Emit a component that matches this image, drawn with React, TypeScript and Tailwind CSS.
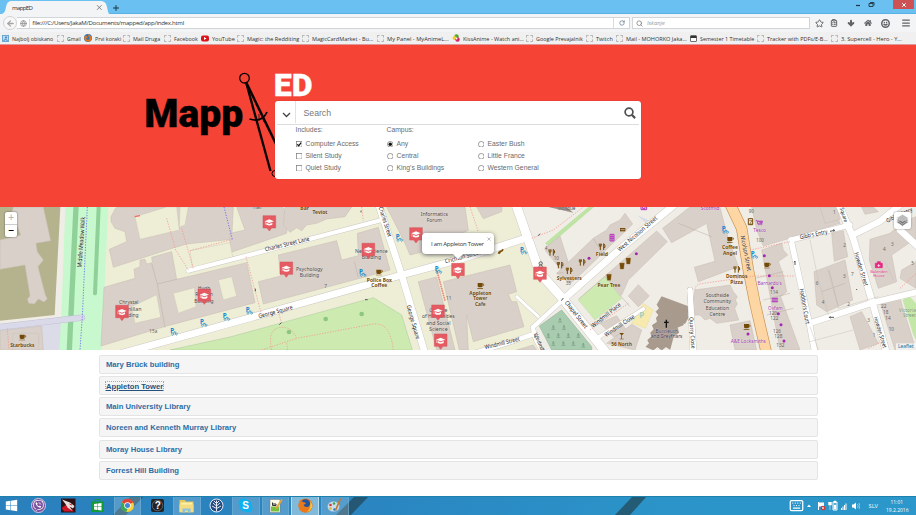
import React from "react";
import { FaViber, FaWindows, FaFirefoxBrowser, FaHome } from "react-icons/fa";
import { ArrowLeft, Globe, RotateCw, Search, Star, ClipboardList, ArrowDown, Smile, Menu, Keyboard, Plus, X } from "lucide-react";

const bookmarks: [string, number, string][] = [
  ["Najbolj obiskano", 54.5, "recent"], ["Gmail", 27, "blank"], ["Prvi koraki", 39.5, "fox"],
  ["Mail Druga", 40.5, "blank"], ["Facebook", 37, "blank"], ["YouTube", 36, "yt"],
  ["Magic: the Redditing", 65.5, "blank"], ["MagicCardMarket - Bu...", 74.5, "blank"],
  ["My Panel - MyAnimeL...", 75, "blank"], ["KissAnime - Watch ani...", 74, "kiss"],
  ["Google Prevajalnik", 60, "blank"], ["Twitch", 30, "blank"], ["Mail - MOHORKO Jaka...", 74, "blank"],
  ["Semester 1 Timetable", 67.5, "cal"], ["Tracker with PDFs/E-B...", 74, "blank"], ["3. Supercell - Hero - Y...", 74, "blank"],
];

function BookmarkIcon({ kind }: { kind: string }) {
  if (kind === "blank") return <span className="h-[7px] w-[7px] shrink-0 rounded-[1px] border border-dashed border-[#b9b9b9]" />;
  if (kind === "fox") return <FaFirefoxBrowser className="h-2 w-2 shrink-0 rounded-full bg-[#2878b8] text-[#e8761c]" />;
  if (kind === "yt")
    return (
      <svg className="h-[7px] w-2 shrink-0" viewBox="0 0 16 14"><rect y="1" width="16" height="12" rx="4" fill="#d9141b" /><path d="M6 4l5 3-5 3z" fill="#fff" /></svg>
    );
  if (kind === "kiss")
    return (
      <svg className="h-2 w-2 shrink-0" viewBox="0 0 16 16"><circle cx="9" cy="5" r="4.5" fill="#54a82a" /><circle cx="5" cy="8" r="4" fill="#f0cf28" /><circle cx="11" cy="11" r="4.5" fill="#d5246d" /><circle cx="9" cy="9" r="2" fill="#fff" /></svg>
    );
  if (kind === "cal")
    return (
      <svg className="h-[7px] w-[7px] shrink-0" viewBox="0 0 14 14"><rect x="1" y="2" width="12" height="11" rx="1" fill="#fff" stroke="#444" strokeWidth="1.500" /><path d="M1 1h12v5H1z" fill="#333" /></svg>
    );
  return (
    <svg className="h-[7px] w-[7px] shrink-0" viewBox="0 0 14 14"><rect x="1" y="1" width="12" height="12" fill="#b9d9ef" stroke="#6ba9d4" strokeWidth="2" /><circle cx="8" cy="5" r="2" fill="#347fb8" /><path d="M3 12l4-4 4 4" stroke="#347fb8" fill="none" strokeWidth="2" /></svg>
  );
}

function Browser() {
  return (
    <div className="font-['Open_Sans','Noto_Sans',sans-serif] text-[#333]">
      <div className="flex h-[14px] items-start justify-between border-b border-[#58b2e6] bg-[#69c0f1]">
        <div className="flex h-[14px]">
          <svg className="h-[14px] w-[110px]" viewBox="0 0 110 14">
            <path d="M0 14C5 14 5 11 6 7Q7 1 11 1H101Q106 1 107 7C108 11 108 14 110 14Z" fill="#f2f4f6" />
            <text x="12" y="9.700" fontSize="6.1" fill="#333" textLength="21">mappED</text>
            <path d="M97 5.2l4.600 4.600M101.600 5.200L97 9.800" stroke="#666" strokeWidth=".8" />
          </svg>
          <Plus className="mt-[4px] ml-[2px] h-[8px] w-[8px] text-[#31566d]" strokeWidth={4} />
        </div>
        <div className="flex items-center">
          <svg className="h-[9px] w-[42px]" viewBox="0 0 42 9"><path d="M5 5.500h4" stroke="#234" strokeWidth="1.200" /><path d="M18 3.500h4v3h-4zM19 2.500h4v3" stroke="#234" fill="none" strokeWidth=".9" /></svg>
          <div className="mr-[2px] flex h-[9px] w-[21px] items-center justify-center bg-[#cc5254]"><X className="h-[6px] w-[6px] text-white" strokeWidth={4} /></div>
        </div>
      </div>
      <div className="flex h-[18px] items-center bg-[#f3f4f5]">
        <div className="ml-[3px] flex h-[14px] w-[14px] shrink-0 items-center justify-center rounded-full border border-[#d2d2d2] bg-[#f8f8f8]"><ArrowLeft className="h-[9px] w-[9px] text-[#a5a5a5]" strokeWidth={3.5} /></div>
        <div className="flex h-[12px] w-[613px] items-center border border-l-0 border-[#d2d5d8] bg-white">
          <Globe className="ml-[3px] h-[7px] w-[7px] text-[#999]" strokeWidth={3} />
          <span className="ml-[2px] h-[9px] border-l border-[#ddd]" />
          <svg className="ml-[2px] h-[10px] w-[155px]" viewBox="0 0 155 10"><text y="7.300" fontSize="6.100" fill="#333" textLength="152">file:///C:/Users/JakaM/Documents/mapped/app/index.html</text></svg>
          <span className="ml-auto flex h-full w-[16px] items-center justify-center border-l border-[#d8dce0]"><RotateCw className="h-[6px] w-[6px] text-[#6c8093]" strokeWidth={3} /></span>
        </div>
        <div className="ml-[2px] flex h-[12px] w-[178px] items-center gap-[4px] border border-[#d2d5d8] bg-white pl-[3px] text-[5.8px] italic text-[#999]"><Search className="h-[7px] w-[7px] text-[#777]" strokeWidth={2.500} /><span>Iskanje</span></div>
        <div className="ml-[5px] flex items-center gap-[9px] text-[#606367]">
          <Star className="h-[9px] w-[9px]" strokeWidth={2.500} />
          <ClipboardList className="-ml-[3px] h-[8px] w-[8px]" strokeWidth={3} />
          <ArrowDown className="h-[8px] w-[8px]" strokeWidth={6} />
          <FaHome className="h-[8px] w-[8px]" />
          <Smile className="h-[9px] w-[9px]" strokeWidth={4} />
          <Menu className="ml-[2px] h-[10px] w-[10px]" strokeWidth={3} />
        </div>
      </div>
      <div className="flex h-[13px] items-center overflow-hidden border-b border-[#d99] bg-[#f0f0f0] pl-[2px]">
        {bookmarks.map(([name, width, kind]) => (
          <div key={name} className="flex shrink-0 items-center gap-[3px]" style={{ width }}>
            <BookmarkIcon kind={kind} />
            <svg className="h-[10px] flex-1 overflow-visible">
              <text y="7.500" fontSize="6" fill="#333" textLength={width - 13.2} lengthAdjust="spacingAndGlyphs">{name}</text>
            </svg>
          </div>
        ))}
      </div>
    </div>
  );
}

function Option({ label, checked = false, round = false }: { label: string; checked?: boolean; round?: boolean }) {
  return (
    <div className="flex h-[12px] items-center gap-[3.5px]">
      <svg className="h-[6.5px] w-[6.5px]" viewBox="0 0 12 12">
        {round ? <circle cx="6" cy="6" r="5.200" fill="#fff" stroke="#777" strokeWidth="1.300" /> : <rect x=".8" y=".8" width="10.400" height="10.400" fill="#fff" stroke="#777" strokeWidth="1.300" />}
        {checked && (round ? <circle cx="6" cy="6" r="3.200" fill="#111" /> : <path d="M2.500 6l2.500 3 4.500-6" fill="none" stroke="#111" strokeWidth="2.200" />)}
      </svg>
      <span>{label}</span>
    </div>
  );
}

function Header() {
  return (
    <header className="relative h-[162px] overflow-hidden bg-[#f54336]">
      <svg className="absolute inset-0 h-[162px] w-[330px] font-['Roboto',sans-serif]" viewBox="0 45 330 162">
        <text x="144.300" y="126.500" fontSize="38" fontWeight="900" textLength="99" lengthAdjust="spacingAndGlyphs" stroke="#000" strokeWidth=".3">Mapp</text>
        <text x="273.700" y="95.500" fontSize="31" fontWeight="900" fill="#fff" textLength="38.800" lengthAdjust="spacingAndGlyphs" stroke="#fff" strokeWidth=".3">ED</text>
        <g fill="none" stroke="#080202">
          <circle cx="244.500" cy="78.200" r="4.800" strokeWidth="1.300" />
          <path d="M246 82L270.500 171" strokeWidth="2.300" />
          <path d="M246 82L277 146" strokeWidth="2.500" />
          <path d="M249.500 119Q262 123 267 112" strokeWidth="1.800" />
          <path d="M259 114v7M262 117l2 5" strokeWidth=".7" />
          <circle cx="275" cy="173.500" r="3" strokeWidth="1" />
        </g>
      </svg>
      <div className="relative mt-[55.5px] ml-[275px] h-[78.5px] w-[366px] rounded-[3px] bg-white font-['Liberation_Sans',Arial,sans-serif] text-[6.8px] text-[#6b6b6b] shadow-[0_0_1px_#a33]">
        <div className="mx-[2px] flex h-[24px] items-center border-b border-[#ddd]">
          <div className="flex h-[22px] w-[19px] items-center justify-center border-r border-[#e2e2e2] pt-[5px]"><svg className="h-[6px] w-[9px]" viewBox="0 0 9 6"><path d="M1 1l3.500 3.500L8 1" fill="none" stroke="#444" strokeWidth="1.300" /></svg></div>
          <span className="ml-[7.5px] pt-[3px] text-[8.7px] text-[#777]">Search</span>
          <svg className="mt-[1px] mr-[3px] ml-auto h-[12px] w-[12px]" viewBox="0 0 12 12" fill="none" stroke="#505050"><circle cx="5" cy="5" r="3.900" strokeWidth="1.700" /><path d="M7.800 7.800l3.300 3.300" strokeWidth="2.200" /></svg>
        </div>
        <div className="grid grid-cols-[91px_91px_1fr] pt-[.5px] pl-[20.500px]">
          <div><div className="mb-[3px] h-[10px] leading-[10px]">Includes:</div><Option label="Computer Access" checked /><Option label="Silent Study" /><Option label="Quiet Study" /></div>
          <div><div className="mb-[3px] h-[10px] leading-[10px]">Campus:</div><Option round label="Any" checked /><Option round label="Central" /><Option round label="King's Buildings" /></div>
          <div className="pt-[13px]"><Option round label="Easter Bush" /><Option round label="Little France" /><Option round label="Western General" /></div>
        </div>
      </div>
    </header>
  );
}

/* Map drawing units: three units per screen pixel. */
const BUILDINGS = [
  "40,21 130,21 152,122 108,130 112,155 130,180 114,200 136,285 142,296 132,306 115,297 103,312 86,310 82,297 90,288 75,195 0,208 0,120 62,105 36,35",
  "0,392 125,378 130,450 0,450",
  "345,28 333,50 333,65 345,85 375,95 380,125 328,148 340,202 500,150 560,132 695,118 700,21 350,21",
  "312,262 405,235 402,208 420,200 420,180 435,178 440,192 457,188 455,172 515,155 530,238 740,188 765,308 500,378 303,438",
  "710,21 848,21 865,50 860,100 690,158 690,100 735,90",
  "855,21 1055,21 1035,50 980,57 950,70 920,75 905,92 890,83 870,97 850,75",
  "775,245 842,228 835,165 1010,122 1025,180 1075,167 1072,100 1135,82 1170,210 1080,235 790,312",
  "1160,21 1395,21 1405,90 1300,148 1230,165 1215,130",
  "1255,245 1310,231 1350,390 1365,450 1310,450",
  "1330,245 1530,195 1550,275 1525,283 1535,305 1550,305 1572,380 1420,425 1400,345 1405,450 1378,450",
  "1430,21 1506,21 1505,35 1450,56", "1550,450 1600,435 1610,450",
  "1640,140 1680,108 1710,203 1690,218 1635,150",
  "1670,220 1780,115 1820,90 1830,75 1860,60 1875,40 1898,72 1730,235 1710,250",
  "1735,298 1970,93 2002,125 1885,240 1865,285 1840,298 1815,230",
  "1885,288 1915,254 1948,288 1915,320", "1800,370 1850,347 1885,400 1840,410",
  "1860,400 1895,373 1925,390 1905,450 1820,430",
  "1988,85 2070,21 2160,21 2180,100 2215,200 2095,245 2083,202 2145,184 2120,70 2015,128",
  "2255,21 2500,21 2520,70 2290,138 2270,90",
  "2285,150 2345,130 2350,150 2363,165 2335,185 2350,225 2360,275 2342,290 2400,450 2340,450",
  "2085,270 2190,255 2200,275 2212,290 2206,300 2212,312 2204,325 2216,360 2150,370 2130,355 2115,360 2100,345 2085,345 2078,310",
  "2190,375 2250,362 2270,450 2205,450", "2442,215 2535,180 2558,300 2480,335 2450,315",
  "2495,100 2530,92 2543,170 2503,184", "2610,118 2670,100 2710,65 2748,50 2748,115 2675,165 2690,245 2635,265 2608,180",
  "2550,350 2585,335 2635,430 2580,450", "2640,305 2700,295 2748,450 2685,450", "2460,21 2510,21 2520,58 2475,70", "2585,21 2620,21 2635,35 2595,43",
  "2705,210 2748,185 2748,265 2700,235",
];

const ROADS: [string, number][] = [
  ["M565 212L690 180L1145 60", 13],
  ["M330 470L690 370L1205 225L1390 175L1575 115", 21],
  ["M1138 21L1205 225L1275 460", 20],
  ["M1545 5L1620 220L1690 298L1820 460", 27],
  ["M1690 298L1860 147L2035 5", 21],
  ["M1690 298L1598 382L1608 420L1630 460", 13],
  ["M1420 460L1520 430L1602 402", 14],
  ["M1550 290L1615 350", 9], ["M1930 327L1790 415", 11],
  ["M2070 270L2078 450", 15], ["M2070 270L2082 460", 15],
  ["M2373 120L2428 370L2445 460", 17], ["M2373 120L2550 75", 16],
  ["M2515 10L2558 110L2618 310L2660 460", 20],
  ["M2428 370L2618 308L2760 274", 18], ["M2558 105L2638 65L2700 15", 19],
  ["M2700 90L2760 145", 20],
];

const MARKERS = [[808, 67], [1105, 150], [859, 206], [613, 287], [366, 336], [1248, 103], [1374, 210], [1620, 221], [1314, 335], [1322, 422]];
const BIKES = [[521, 393], [610, 367], [678, 349], [747, 330], [1087, 217], [1197, 112], [1314, 208], [1570, 150], [2175, 88], [2262, 163]];
const DOTS = [[1767, 175], [1909, 161], [2293, 167], [2308, 227], [2317, 263], [2335, 341], [2343, 374], [2352, 423], [2244, 402]];

function Label({ x, y, t, r = 0, w, c = "#444", s = 18, b = false }: { x: number; y: number; t: string; r?: number; w?: number; c?: string; s?: number; b?: boolean }) {
  return (
    <text x={x} y={y} transform={`rotate(${r} ${x} ${y})`} textAnchor="middle" textLength={w} lengthAdjust="spacingAndGlyphs" fontSize={s} fontWeight={b ? 700 : 400} fill={c} stroke="#fff" strokeWidth="2" strokeOpacity=".4" paintOrder="stroke">{t}</text>
  );
}

const brown = "#734a08";
const purple = "#a33bb0";

function Cup({ x, y }: { x: number; y: number }) {
  return <g transform={`translate(${x} ${y})`}><path d="M-8-7H7V1Q7 6 2 6H-4Q-8 6-8 1ZM-9 8H8V10H-9Z" fill={brown} /><path d="M7-4h3q2 5-3 6" fill="none" stroke={brown} strokeWidth="2" /></g>;
}
function Fork({ x, y }: { x: number; y: number }) {
  return <path transform={`translate(${x} ${y})`} d="M-8-9v6q0 3 3 3v10M-2-9v6q0 3-3 3M-5-9v9M5 10v-19q5 3 4 11h-4" fill="none" stroke={brown} strokeWidth="3" />;
}
function Beer({ x, y }: { x: number; y: number }) {
  return <path transform={`translate(${x} ${y})`} d="M-7-9H7L5 9H-5Z M-5-6H5" fill={brown} stroke="#93662b" strokeWidth="1" />;
}

function MapView() {
  return (
    <div className="relative h-[143px] overflow-hidden">
      <svg className="block h-[143px] w-[916px] font-['Noto_Sans','Open_Sans',sans-serif]" viewBox="0 21 2748 429">
        <rect y="21" width="2748" height="429" fill="#f0ede6" />
        <path d="M325 21H1535L1690 298L1605 385L1620 450H305Z" fill="#eeeed6" />
        <path d="M0 21H181L164 345L0 362Z" fill="#b5b28e" />
        <path d="M0 390L185 368L180 450H0Z" fill="#dcdce9" />
        <path d="M196 21H325L305 450H178L184 350Z" fill="#c8f8cd" />
        <path d="M228 21L208 450" stroke="#8fd198" strokeWidth="16" />
        <path d="M296 21L285 280" stroke="#8fd198" strokeWidth="12" strokeLinecap="round" />
        <path d="M510 450L690 411L1120 293L1205 345L1237 450Z" fill="#cdebb0" stroke="#a9c59a" strokeWidth="1.500" />
        <path d="M1635 130L1765 21H1782L1645 139Z" fill="#bfe3a5" />
        {BUILDINGS.map((p) => <polygon key={p} points={p} fill="#d9d0c9" stroke="#c8bdb4" strokeWidth="1.600" />)}
        <path d="M38 400h78v50H38z" fill="#d9d0c9" stroke="#c8bdb4" />
        <g fill="#eeeed6" stroke="#c9bfb2" strokeWidth="1.200">
          <path d="M405 50L500 21H530L538 90L420 118ZM540 21L565 21L555 75L538 82Z" />
          <path d="M395 320L470 284L482 352L405 370ZM520 280L583 263L588 320L535 340ZM655 240L695 230L710 288L670 300ZM570 152L690 128L700 180L578 205Z" />
        </g>
        <path d="M455 190L472 252L495 383M472 252L530 238M1063 185L1075 232M1862 288L1890 320M1690 218L1670 220M1780 115L1810 165M2465 275L2535 250M2487 210L2515 320M2265 235L2350 215M2290 300L2370 280M2300 345L2380 325M2135 110L2035 70" fill="none" stroke="#bdb0a6" strokeWidth="1.600" />
        <path d="M1735 300L1815 230L1865 295L1785 360Z" fill="#cdebb0" stroke="#b5d59a" />
        <path d="M1618 378L1685 330L1775 440V450H1655Z" fill="#a9cbaf" stroke="#87af8e" strokeWidth="1.500" />
        <path d="M1895 370L1930 310L1960 330L1937 385Z" fill="#f6eaae" stroke="#e4d396" />
        <path d="M1985 290L2066 320L2062 350L2046 362L2050 375L2032 382L2036 398L2020 410L2010 448L1998 440L1985 450L1972 440L1960 450L1938 440L1948 430L1943 420L1955 410L1952 398L1962 388L1957 376L1972 366L1969 354L1976 345L1968 335L1978 325L1971 314Z" fill="#a99a8e" stroke="#938376" strokeWidth="1.500" />
        <path d="M2028 308Q2055 330 2067 350L2055 372L2028 365Z" fill="#a99a8e" />
        <path d="M1645 21L1720 38L1700 21Z" fill="#9b8d83" />
        <path d="M1910 45L1950 62L1940 72L1900 35Z" fill="#dcdce9" />
        <path d="M2708 300L2725 285L2748 310V420L2740 405Z" fill="#c3e7a6" />
        <path d="M0 381L246 353" stroke="#c1c1d2" strokeWidth="19" strokeLinecap="round" />
        <path d="M0 381L246 353" stroke="#d9d9e9" strokeWidth="16" strokeLinecap="round" />
        <g fill="none" strokeLinejoin="round" strokeLinecap="round">
          {ROADS.map(([d, w]) => <path key={"c" + d} d={d} stroke="#c9c6c0" strokeWidth={w + 2.500} />)}
          {ROADS.map(([d, w]) => <path key={d} d={d} stroke="#fff" strokeWidth={w} />)}
          <path d="M2175 -20L2225 85L2245 210L2265 310L2302 470" stroke="#c69353" strokeWidth="34" />
          <path d="M2175 -20L2225 85L2245 210L2265 310L2302 470" stroke="#fdd6a4" strokeWidth="30" />
        </g>
        <g fill="none" strokeWidth="2.500" strokeDasharray="4 4">
          <path d="M262 21L247 350L240 450M672 21L697 118" stroke="#696bf0" />
          <path d="M500 55L527 150L565 210M545 85L580 205M570 152L697 118M738 170L785 345M815 450Q800 380 850 382Q875 382 890 415L1120 372Q1170 365 1180 450M785 450L890 415M835 335L845 370M1410 21L1435 95M1595 115L1660 90L1750 21M1085 21L1090 62M2085 270Q2085 252 2110 250L2265 228L2385 228M2250 150L2370 125M1770 390L1885 310M22 385L27 450M2700 265L2748 220M2605 445L2645 425M860 430L863 450" stroke="#f29b94" />
        </g>
        <path d="M1310 210L1335 302" stroke="#ed8781" strokeWidth="5" strokeDasharray="5 2" />
        <path d="M404 50L420 47" stroke="#ed6e61" strokeWidth="4" />
        <path d="M2482 205L2515 325L2635 290M2430 120L2455 240L2485 345M2430 380L2455 450M2430 425L2560 390M2655 185L2680 240" fill="none" stroke="#c9c3b9" strokeWidth="1.500" />
        <g fill="#8dc77f">{[[867, 396], [977, 357], [1085, 342]].map(([x, y]) => <circle key={x} cx={x} cy={y} r="7" />)}</g>
        {[[1680, 360], [1660, 382], [1692, 382], [1645, 406], [1675, 406], [1705, 406], [1735, 406], [1660, 430], [1690, 430], [1720, 430], [1750, 435]].map(([x, y]) => <path key={`${x}-${y}`} d={`M${x} ${y - 6}v12m-6 0h12m-9-5l3-6 3 6`} stroke="#739d7b" strokeWidth="2" fill="none" />)}
        <Label x={250} y={127} r={-86} t="Middle Meadow Walk" w={152} c="#222" />
        <Label x={863} y={138} r={-14} t="Charles Street Lane" w={137} c="#222" />
        <Label x={828} y={341} r={-15} t="George Square" w={105} c="#222" />
        <Label x={1150} y={67} r={72} t="Charles Street" w={93} c="#222" />
        <Label x={1234} y={368} r={74} t="George Square" w={105} c="#222" />
        <Label x={1390} y={176} r={-15} t="Crichton Street" w={110} c="#222" />
        <Label x={1724} y={347} r={52} t="Chapel Street" w={99} c="#222" />
        <Label x={1916} y={106} r={-41} t="West Nicolson Street" w={151} c="#222" />
        <Label x={1822} y={350} r={-39} t="Windmill Place" w={108} c="#222" />
        <Label x={1862} y={382} r={-34} t="Windmill Close" w={104} c="#222" />
        <Label x={1508} y={435} r={-14} t="Windmill Street" w={107} c="#222" />
        <Label x={1612} y={428} r={68} t="Windmill" w={56} s={16} c="#222" />
        <Label x={2071} y={399} r={86} t="Quarry Close" w={94} s={17} c="#222" />
        <Label x={2232} y={161} r={79} t="Nicolson Street" w={108} c="#222" />
        <Label x={2442} y={109} r={-12} t="Gibb's Entry" w={85} c="#222" />
        <Label x={2408} y={320} r={80} t="Haddon's Court" w={108} c="#222" />
        <Label x={2578} y={209} r={73} t="Howden Street" w={104} c="#222" />
        <Label x={2635} y={399} r={73} t="Howden Street" w={97} c="#222" />
        <Label x={2526} y={46} r={73} t="Square" w={44} s={16} c="#222" />
        <Label x={2700} y={50} r={-25} t="Gibb's Entry" w={85} s={17} c="#222" />
        <Label x={386} y={313} t="Chrystal" w={58} /><Label x={386} y={332} t="Macmillan" w={77} /><Label x={387} y={351} t="Building" w={58} />
        <Label x={612} y={270} t="Hugh" w={36} /><Label x={612} y={289} t="Robson" w={53} /><Label x={612} y={308} t="Building" w={58} />
        <Label x={928} y={214} t="Psychology" w={80} /><Label x={928} y={232} t="Building" w={58} />
        <Label x={1114} y={159} t="Neuroscience" w={98} /><Label x={1114} y={177} t="Building" w={58} />
        <Label x={1303} y={47} t="Informatics" w={82} /><Label x={1303} y={65} t="Forum" w={45} />
        <Label x={1315} y={336} t="College" w={54} /><Label x={1315} y={355} t="of Humanities" w={98} /><Label x={1315} y={374} t="and Social" w={73} /><Label x={1315} y={392} t="Science" w={56} />
        <Label x={2152} y={292} t="Southside" w={70} /><Label x={2152} y={310} t="Community" w={83} /><Label x={2152} y={329} t="Education" w={70} /><Label x={2152} y={347} t="Centre" w={47} />
        <Label x={772} y={27} t="Hall" w={25} s={14} /><Label x={1700} y={30} t="Mosque" w={53} s={16} />
        {([[67, 440, "Starbucks", 73], [914, 30, "Bar", 26], [960, 42, "Teviot", 45], [1138, 245, "Police Box", 75], [1138, 262, "Coffee", 48], [1441, 284, "Appleton", 66], [1441, 301, "Tower", 42], [1441, 318, "Cafe", 32], [1708, 239, "Sylvesters", 75], [1806, 167, "Field", 37], [1827, 260, "Pear Tree", 69], [1865, 437, "56 North", 62], [2190, 147, "Coffee", 48], [2190, 165, "Angel", 42], [2210, 235, "Dominos", 64], [2210, 252, "Pizza", 38]] as [number, number, string, number][]).map(([x, y, t, w]) => <Label key={`${x}${y}`} x={x} y={y} t={t} w={w} c={brown} s={15} b />)}
        {([[2130, 31, "Scotmid", 55], [2279, 95, "Tesco", 38], [2309, 254, "Barnardo's", 73], [2326, 330, "Oxfam", 44], [2245, 429, "A&E Locksmiths", 105]] as [number, number, string, number][]).map(([x, y, t, w]) => <Label key={t} x={x} y={y} t={t} w={w} c={purple} s={16} />)}
        <Label x={2637} y={218} t="Balenden" w={53} c="#df2680" s={13} /><Label x={2637} y={231} t="House" w={34} c="#df2680" s={13} />
        <Label x={2000} y={398} t="Buccleuch" w={67} s={16} c="#33375c" /><Label x={2000} y={415} t="and Greyfriars" w={94} s={16} c="#33375c" />
        <Label x={2722} y={336} t="Victoria" w={51} c="#729160" s={15} /><Label x={2728} y={352} t="Street" w={38} c="#729160" s={15} />
        {([[460, 398, "15a"], [977, 265, "7"], [1346, 300, "11"], [1669, 181, "10"], [1705, 256, "35"], [2254, 38, "90"], [2280, 126, "100"], [2322, 283, "114"], [2319, 345, "120"], [2323, 359, "122"], [2331, 400, "126"], [2335, 414, "128"], [2341, 440, "132"], [2503, 43, "1"], [2534, 140, "2"], [2533, 235, "3"], [2557, 228, "7"], [2451, 254, "6"], [2469, 313, "4"], [2546, 317, "2"], [2606, 365, "3"], [2622, 412, "1"], [2651, 323, "22"], [2657, 342, "18"], [2664, 359, "14"], [2674, 392, "10"], [2653, 154, "4"], [2677, 138, "3"], [2738, 195, "5"], [1638, 150, "4"]] as [number, number, string][]).map(([x, y, t]) => <text key={`${x}${y}`} x={x} y={y} fontSize="14" textAnchor="middle" fill="#666">{t}</text>)}
        {BIKES.map(([x, y]) => <g key={`${x}-${y}`} transform={`translate(${x} ${y})`}><text x="-10" y="6" fontSize="19" fontWeight="700" fill="#1689d0">P</text><path d="M-3 6a3 3 0 1 0 .1 0M8 6a3 3 0 1 0 .1 0M-2 8l4-6 6 7M1 3h6" fill="none" stroke="#1689d0" strokeWidth="1.700" /></g>)}
        <text x="1918" y="354" fontSize="24" fontWeight="700" fill="#a4cfbd">P</text>
        <Cup x={67} y={411} /><Cup x={1137} y={216} /><Cup x={1441} y={256} /><Cup x={2190} y={118} /><Cup x={2301} y={195} /><Cup x={2240} y={379} />
        <Fork x={1655} y={157} /><Fork x={1680} y={195} /><Fork x={1707} y={212} /><Fork x={1746} y={187} /><Fork x={1806} y={140} /><Fork x={2210} y={208} />
        <Beer x={1827} y={232} /><Beer x={1866} y={198} /><Beer x={1885} y={183} />
        <path d="M1858 399h14l-6 7v10h5v2h-12v-2h5v-10z" fill={brown} />
        <path d="M1494 160q3-9 9-8l6-5v5l-7 4-3 5z" fill={brown} stroke={brown} strokeWidth="2" />
        <path d="M1860 84h16v10h-16z" fill={brown} /><path d="M1862 89h12" stroke="#ddd" strokeWidth="2" />
        <path d="M2245 56h13v18h-13z" fill="none" stroke={brown} strokeWidth="3" /><path d="M2248 62h8l-7 10h8" fill="none" stroke={brown} strokeWidth="2" />
        <path d="M1830 103h12v20h-12zM1830 110h12M1830 116h12M1836 103v20M1923 20v9h17v-9M1928 20v6h7v-6" fill="none" stroke="#b434bd" strokeWidth="3" />
        <path d="M2267 61h4l3 12h13M2271 63h17l-2 8h-13zM2274 77h1M2285 77h1M2316 294h17v4h-17zM2316 302h17v4h-17z" fill="#b44fbf" stroke="#b44fbf" strokeWidth="2" />
        <path d="M2626 190h21v13h-21zM2632 190v-5h9v5" fill="#e62782" stroke="#e62782" strokeWidth="2" /><path d="M2636 192v9m-4-4h9" stroke="#fff" strokeWidth="2" />
        <path d="M1999 359v24M1992 367h14" stroke="#111" strokeWidth="4" />
        {DOTS.map(([x, y]) => <circle key={`${x}-${y}`} cx={x} cy={y} r="4.500" fill="#a327b4" />)}
        <path d="M766 266v8M844 368l-6 6M1095 299h8M1620 101l-5 6M1605 405v9M1690 294l-6 8M2385 195v-12l-3 4M2488 352h14m-11-3l-3 3 3 3M2490 94l14-3m-4-3l4 3-3 4M2570 267v3M1083 32v5" fill="none" stroke="#555" strokeWidth="3" />
        <circle cx="1622" cy="190" r="5" fill="#ddd" stroke="#333" strokeWidth="2" /><circle cx="1622" cy="200" r="5" fill="#ddd" stroke="#333" strokeWidth="2" />
        {MARKERS.map(([x, y]) => (
          <g key={`${x}-${y}`} transform={`translate(${x} ${y})`} opacity=".92">
            <path d="M-19-20H19V17H7L0 26L-7 17H-19Z" fill="#e8515a" stroke="#cc4b52" strokeWidth="1.500" />
            <path d="M-14-3L0-9L14-3L0 2ZM-9 1V7Q0 12 9 7V1L0 5Z" fill="#fff" /><path d="M-12-2V7" stroke="#fff" strokeWidth="1.500" />
          </g>
        ))}
        <rect x="2688" y="430" width="60" height="20" fill="#fff" opacity=".65" /><text x="2694" y="443" fontSize="15" textLength="47" fill="#0878a8">Leaflet</text>
      </svg>
      <div className="absolute top-[5px] left-[5px] w-[12px] overflow-hidden rounded-[2px] bg-white text-center font-['DejaVu_Sans',sans-serif] text-[8px] font-bold leading-[12px] shadow-[0_0_2px_#555]"><div className="border-b border-[#ccc] text-[#bbb]">+</div><div className="text-black">−</div></div>
      <div className="absolute top-[26px] left-[422px] h-[21px] w-[72px] rounded-[4px] bg-white shadow-[0_1px_4px_#666]">
        <svg className="h-[31px] w-[72px] overflow-visible font-['Open_Sans',sans-serif]" viewBox="0 0 72 31"><path d="M30 20h12l-6 6z" fill="#fff" /><text x="9" y="12.500" fontSize="6" fill="#333" textLength="53">I am Appleton Tower</text><path d="M65.500 4.500l3 3m0-3l-3 3" stroke="#aaa" strokeWidth=".8" /></svg>
      </div>
      <div className="absolute top-[5px] left-[894px] flex h-[17px] w-[17px] items-center justify-center rounded-[2px] bg-white shadow-[0_0_2px_#777]"><svg className="h-[13px] w-[13px]" viewBox="0 0 26 26"><path d="M1 16L13 9l12 7-12 8zM1 12L13 5l12 7-12 8z" fill="#777" stroke="#eee" /><path d="M1 8L13 1l12 7-12 7z" fill="#bbb" stroke="#eee" /></svg></div>
    </div>
  );
}

const buildings = ["Mary Brück building", "Appleton Tower", "Main University Library", "Noreen and Kenneth Murray Library", "Moray House Library", "Forrest Hill Building"];

const TASKS = ["viber", "dragon", "store", "chrome", "question", "explorer", "tree", "skype", "note", "firefox", "paint"];

function TaskIcon({ kind }: { kind: string }) {
  if (kind === "viber") return <span className="flex h-[15px] w-[15px] items-center justify-center rounded-full border border-[#d5cbe6] bg-[#7b519d]"><FaViber className="h-[11px] w-[11px] text-white" /></span>;
  if (kind === "skype")
    return (
      <svg className="h-[15px] w-[15px] font-['Liberation_Sans',sans-serif]" viewBox="0 0 30 30"><circle cx="10" cy="10" r="9" fill="#10b0ee" /><circle cx="20" cy="20" r="9" fill="#10b0ee" /><circle cx="15" cy="15" r="12.500" fill="#10b0ee" /><text x="15" y="22" textAnchor="middle" fontSize="20" fontWeight="700" fill="#fff">S</text></svg>
    );
  if (kind === "firefox")
    return (
      <svg className="h-[15px] w-[15px]" viewBox="0 0 30 30"><circle cx="15" cy="15" r="14" fill="#e3731c" /><circle cx="15" cy="12" r="9.500" fill="#24549b" /><path d="M2 9Q3 5 6 3Q6 7 10 8Q15 8 16 11L11 14Q13 19 19 18Q25 17 24 7Q30 13 28 19Q24 29 14 29Q2 28 1 16Z" fill="#e8791d" /><path d="M24 6Q30 13 28 19Q25 26 18 28Q27 20 24 6Z" fill="#f6c33a" /></svg>
    );
  return (
    <svg className="h-[15px] w-[15px]" viewBox="0 0 30 30">
      {kind === "dragon" && <g><path d="M0 1h29v28H0z" fill="#2c1014" /><path d="M1 20l11-8 14 15H6z" fill="#c91524" /><path d="M2 3l16 6 9 7-3 5-7-4 6 9-10-7-4-7z" fill="#e6dfdc" /><path d="M17 12l5 2" stroke="#d31824" strokeWidth="2" /></g>}
      {kind === "store" && <g><path d="M2 7h26v21H2z" fill="#129b38" /><path d="M10 7V3h10v4" fill="none" stroke="#129b38" strokeWidth="2" /><path d="M8 12l7-1v6H8zm8-1l7-1v7h-7zM8 18h7v6l-7-1zm8 0h7v7l-7-1z" fill="#fff" /></g>}
      {kind === "chrome" && <g><circle cx="15" cy="15" r="13" fill="#fbd237" /><path d="M15 15L3.500 8.500A13 13 0 0 1 26.500 8.500z" fill="#de4439" /><path d="M3.500 8.500a13 13 0 0 0 9 19.300l4-10z" fill="#35a853" /><circle cx="15" cy="15" r="6.500" fill="#fff" /><circle cx="15" cy="15" r="5" fill="#4285d9" /></g>}
      {kind === "question" && <g><rect x="2" y="2" width="26" height="26" rx="4" fill="#202226" /><circle cx="15" cy="15" r="10.500" fill="none" stroke="#999" /><text x="9.500" y="22" fontSize="20" fontWeight="700" fill="#fff" className="font-['Liberation_Sans',sans-serif]">?</text></g>}
      {kind === "explorer" && <g><path d="M1 4h11l2 3h15v22H1z" fill="#e7c75f" /><path d="M3 9h24v12H3z" fill="#fff2a6" /><path d="M1 13h28v15H1z" fill="#f5dc80" /><path d="M7 21h16v8h-5v-4h-6v4H7z" fill="#8cc3de" /></g>}
      {kind === "tree" && <g><circle cx="15" cy="15" r="13" fill="#244a80" stroke="#e5eef8" strokeWidth="2" /><path d="M15 27V5M8 10l7 6 7-6M6 16l9 5 9-5M10 6l5 5 5-5" stroke="#e5eef8" strokeWidth="2" fill="none" /></g>}
      {kind === "note" && <g><path d="M4 3h20v26H4z" fill="#fafbe9" stroke="#777" /><path d="M6 17h16v10H6z" fill="#78bf3f" /><path d="M9 9v6h7M9 12h7v3" fill="none" stroke="#333" strokeWidth="2" /><path d="M16 21L28 3" stroke="#e4a43e" strokeWidth="3.500" /></g>}
      {kind === "paint" && <g><ellipse cx="13" cy="17" rx="12" ry="10.500" fill="#c9dfee" stroke="#6b9ec4" /><circle cx="7" cy="14" r="2.600" fill="#cd3d35" /><circle cx="14" cy="11" r="2.600" fill="#43a54a" /><circle cx="7" cy="21" r="2.600" fill="#e3b52c" /><circle cx="15" cy="23" r="2.600" fill="#3179bf" /><path d="M17 25L27 1" stroke="#c67a31" strokeWidth="3.500" /></g>}
    </svg>
  );
}

function Taskbar() {
  const open = ["chrome", "explorer", "skype", "note", "paint"];
  return (
    <div className="relative flex h-[19px] items-center overflow-hidden bg-[#2b93c8] font-['Open_Sans',sans-serif] text-white">
      <svg className="absolute inset-0 h-[19px] w-full" viewBox="0 0 916 19"><defs><linearGradient id="bar"><stop offset="0" stopColor="#2a80bc" /><stop offset=".4" stopColor="#2a85c0" /><stop offset=".7" stopColor="#2b93c8" /><stop offset="1" stopColor="#2b97ca" /></linearGradient></defs><path d="M0 0h916v19H0z" fill="url(#bar)" /><path d="M131 0h13l-18 19h-13zM355 0h14l-18 19h-15zM633 0h14l-17 19h-15z" fill="#23485a" opacity=".75" /><path d="M0 .5h916" stroke="#1d81ae" /></svg>
      <div className="relative flex items-center pl-[5px]">
        <FaWindows className="mr-[6px] h-[13px] w-[13px]" />
        {TASKS.map((kind) => <div key={kind} className={`mx-px flex h-[18px] w-[27.600px] items-center justify-center ${kind === "firefox" ? "border-x border-[#b7dced] bg-[#80b9da]" : open.includes(kind) ? "border-x border-[#70afd4]/60 bg-white/20" : ""}`}><TaskIcon kind={kind} /></div>)}
      </div>
      <div className="relative ml-auto flex items-center">
        <Keyboard className="mr-[-3px] h-[15px] w-[15px]" strokeWidth={2} />
        <svg className="ml-[5px] h-[12px] w-[54px]" viewBox="0 0 54 12" fill="#fff"><path d="M1 7l2-2.500L5 7z" /><path d="M12 2h1v8h-1zM13 2.500h5v4h-5z" /><circle cx="17" cy="8" r="2.300" fill="#d33832" /><path d="M16 7l2 2m0-2l-2 2" stroke="#fff" strokeWidth=".6" /><path d="M27 2h4v8h-4z" fill="none" stroke="#fff" /><path d="M28 1h2v2h-2zM24 3v7M22.500 2v3h3V2M28 5h2v4h-2z" stroke="#fff" strokeWidth=".5" /><path d="M35 8h1v2h-1zM36.500 6.500h1V10h-1zM38 5h1v5h-1zM39.500 3.500h1V10h-1z" /><path d="M46 4.500h1.500L50 2.500v7L47.500 7.500H46z" /><path d="M51.500 4q1.500 2 0 4M53 3q2 3 0 6" fill="none" stroke="#ddd" strokeWidth=".6" /></svg>
        <svg className="ml-[4px] h-[19px] w-[52px]" viewBox="864 0 52 19" fill="#fff" fontSize="6">
          <text x="868.500" y="11.500" textLength="9.500" lengthAdjust="spacingAndGlyphs">SLV</text>
          <text x="890.500" y="8" textLength="12.500" lengthAdjust="spacingAndGlyphs">11:01</text>
          <text x="886" y="16" textLength="22.500" lengthAdjust="spacingAndGlyphs">19.2.2016</text>
        </svg>
      </div>
    </div>
  );
}

export default function App() {
  return (
    <main className="flex h-[515px] w-[916px] flex-col overflow-hidden bg-white">
      <Browser />
      <Header />
      <MapView />
      <div className="flex h-[146px] flex-col gap-[2.200px] bg-white pt-[4.800px] pl-[98.500px] font-['Liberation_Sans',Arial,sans-serif]">
        {buildings.map((name, i) => (
          <div key={name} className="flex h-[19px] w-[719px] shrink-0 items-center rounded-[2px] border border-[#e4e4e4] bg-[#f5f5f5] pt-[.5px] pl-[6.500px] text-[7.65px] font-bold text-[#2e6da4]">
            <span className={i === 1 ? "-mx-px border border-b-0 border-dotted border-[#9aabba] leading-[9px] text-[#23527c] underline" : ""}>{name}</span>
          </div>
        ))}
      </div>
      <Taskbar />
    </main>
  );
}
